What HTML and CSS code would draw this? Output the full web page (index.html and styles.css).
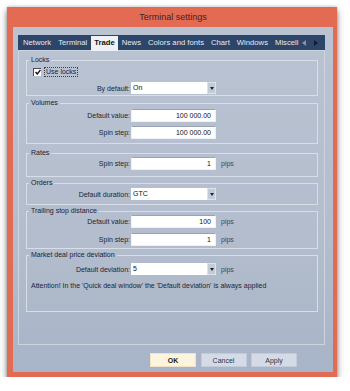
FILE: index.html
```html
<!DOCTYPE html>
<html>
<head>
<meta charset="utf-8">
<link rel="stylesheet" href="styles.css">
</head>
<body>
<div class="window">
  <div class="titlebar">Terminal settings</div>
  <div class="client">
    <div class="tabs">
      <div class="tablist">
        <div class="tab">Network</div>
        <div class="tab">Terminal</div>
        <div class="tab active">Trade</div>
        <div class="tab">News</div>
        <div class="tab">Colors and fonts</div>
        <div class="tab">Chart</div>
        <div class="tab">Windows</div>
        <div class="tab last">Miscell</div>
      </div>
      <div class="arrows">
        <svg width="4" height="6" viewBox="0 0 4 6"><path d="M4 0 L0 3 L4 6 Z" fill="#8592a8"/></svg>
        <svg width="4" height="6" viewBox="0 0 4 6"><path d="M0 0 L4 3 L0 6 Z" fill="#121c2c"/></svg>
      </div>
    </div>
    <div class="panel">
      <fieldset class="grp g-locks">
        <legend>Locks</legend>
        <div class="check-row">
          <span class="cb"><svg width="6" height="6" viewBox="0 0 6 6"><path d="M0.5 3 L2.3 5 L5.5 0.8" fill="none" stroke="#111" stroke-width="1.4"/></svg></span>
          <span class="cb-label">Use locks</span>
        </div>
        <div class="row r-combo1">
          <span class="lbl">By default:</span>
          <div class="combo"><span class="cval">On</span><span class="drop"><svg width="4" height="3" viewBox="0 0 4 3"><path d="M0 0 H4 L2 3 Z" fill="#222"/></svg></span></div>
        </div>
      </fieldset>

      <fieldset class="grp g-volumes">
        <legend>Volumes</legend>
        <div class="row">
          <span class="lbl">Default value:</span>
          <div class="input">100 000.00</div>
        </div>
        <div class="row r-gap4">
          <span class="lbl">Spin step:</span>
          <div class="input">100 000.00</div>
        </div>
      </fieldset>

      <fieldset class="grp g-rates">
        <legend>Rates</legend>
        <div class="row">
          <span class="lbl">Spin step:</span>
          <div class="input">1</div>
          <span class="unit">pips</span>
        </div>
      </fieldset>

      <fieldset class="grp g-orders">
        <legend>Orders</legend>
        <div class="row r-orders">
          <span class="lbl">Default duration:</span>
          <div class="combo"><span class="cval">GTC</span><span class="drop"><svg width="4" height="3" viewBox="0 0 4 3"><path d="M0 0 H4 L2 3 Z" fill="#222"/></svg></span></div>
        </div>
      </fieldset>

      <fieldset class="grp g-trailing">
        <legend>Trailing stop distance</legend>
        <div class="row">
          <span class="lbl">Default value:</span>
          <div class="input">100</div>
          <span class="unit">pips</span>
        </div>
        <div class="row r-gap5">
          <span class="lbl">Spin step:</span>
          <div class="input">1</div>
          <span class="unit">pips</span>
        </div>
      </fieldset>

      <fieldset class="grp g-market">
        <legend>Market deal price deviation</legend>
        <div class="row r-market">
          <span class="lbl">Default deviation:</span>
          <div class="combo"><span class="cval">5</span><span class="drop"><svg width="4" height="3" viewBox="0 0 4 3"><path d="M0 0 H4 L2 3 Z" fill="#222"/></svg></span></div>
          <span class="unit">pips</span>
        </div>
        <p class="note">Attention! In the 'Quick deal window' the 'Default deviation' is always applied</p>
      </fieldset>
    </div>
    <div class="buttons">
      <button class="btn ok">OK</button>
      <button class="btn">Cancel</button>
      <button class="btn">Apply</button>
    </div>
  </div>
</div>
</body>
</html>
```

FILE: styles.css
```css
html, body {
  margin: 0;
  padding: 0;
  background: #ffffff;
}
body {
  font-family: "Liberation Sans", Arial, sans-serif;
  font-size: 7px;
  color: #1c2534;
}
.window {
  margin: 7px 0 0 7px;
  width: 330px;
  box-sizing: border-box;
  padding: 0 4px 5px 6px;
  background: #e36a53;
  box-shadow: 0 4px 7px rgba(0, 0, 0, 0.45), 0 0 3px rgba(0, 0, 0, 0.25);
}
.titlebar {
  height: 20px;
  line-height: 20px;
  text-align: center;
  font-size: 9px;
  color: #3e2420;
}
.client {
  height: 345px;
  box-sizing: border-box;
  padding: 8px 8px 5px 5px;
  background: linear-gradient(#b9c3d2, #b3bdcd 60%, #a8b4c7);
  display: flex;
  flex-direction: column;
}
.tabs {
  height: 15px;
  background: #2c4569;
  display: flex;
  align-items: flex-start;
  padding-left: 1.5px;
}
.tablist {
  width: 280px;
  display: flex;
  white-space: nowrap;
  height: 16px;
}
.tab {
  flex: none;
  font-size: 7.7px;
  line-height: 15px;
  height: 15px;
  padding: 0 3.5px;
  color: #e6ebf2;
}
.tab.last {
  padding-right: 0;
}
.tab.active {
  margin-top: 1px;
  height: 15px;
  line-height: 14px;
  background: #eef1f6;
  color: #0e1420;
  font-weight: bold;
  position: relative;
  z-index: 1;
}
.arrows {
  flex: 1;
  display: flex;
  align-items: center;
  height: 15px;
  gap: 8px;
  padding-left: 2px;
}
.panel {
  height: 295px;
  box-sizing: border-box;
  border: 1px solid #ccd4df;
  padding: 5px 6px 0 7px;
}
.grp {
  margin: 0;
  padding: 0;
  border: 1px solid #d8dee7;
  min-width: 0;
}
.grp legend {
  margin-left: 2px;
  padding: 0 2px;
  font-size: 7px;
  line-height: 8px;
  color: #1a2233;
}
.row {
  display: flex;
  align-items: center;
}
.lbl {
  width: 104px;
  box-sizing: border-box;
  padding-right: 1px;
  text-align: right;
  flex: none;
}
.input {
  width: 85px;
  height: 13px;
  box-sizing: border-box;
  background: #ffffff;
  border: 1px solid #eef1f5;
  border-top-color: #98a2b1;
  text-align: right;
  padding-right: 4px;
  line-height: 11px;
  color: #111;
}
.combo {
  width: 85px;
  height: 12px;
  box-sizing: border-box;
  background: #ffffff;
  display: flex;
  align-items: stretch;
}
.cval {
  flex: 1;
  padding-left: 2px;
  line-height: 12px;
  color: #111;
}
.drop {
  width: 9px;
  background: #c2cbd8;
  border: 1px solid #dde3eb;
  box-sizing: border-box;
  display: flex;
  align-items: center;
  justify-content: center;
}
.unit {
  margin-left: 5px;
  color: #3a475c;
}

.check-row {
  display: flex;
  align-items: center;
  margin: 3px 0 0 6px;
  height: 9px;
}
.cb {
  width: 7px;
  height: 7px;
  background: #ffffff;
  border-left: 1px solid #4a5060;
  border-top: 1px solid #4a5060;
  display: flex;
  align-items: center;
  justify-content: center;
}
.cb-label {
  margin-left: 3px;
  padding: 0 1px;
  line-height: 8px;
  border: 1px dotted #3a4050;
}
.g-locks { padding-bottom: 1px; }
.r-combo1 { margin-top: 6px; }

.g-volumes { margin-top: 3px; padding-top: 2px; padding-bottom: 4px; }
.r-gap4 { margin-top: 4px; }

.g-rates { margin-top: 5px; padding-top: 0; padding-bottom: 6px; }

.g-orders { margin-top: 2px; padding-top: 1px; padding-bottom: 4px; }

.g-trailing { margin-top: 2px; padding-bottom: 2px; }
.r-gap5 { margin-top: 5px; }

.g-market { margin-top: 2px; padding-top: 4px; padding-bottom: 21px; }
.note {
  margin: 7px 0 0 4px;
  line-height: 8px;
  color: #1c2534;
}

.buttons {
  display: flex;
  justify-content: flex-end;
  gap: 4.5px;
  margin-top: 8px;
  padding-right: 28px;
}
.btn {
  width: 46px;
  height: 14px;
  box-sizing: border-box;
  padding: 0;
  margin: 0;
  font-family: "Liberation Sans", Arial, sans-serif;
  font-size: 7px;
  color: #2a3446;
  background: #d4dbe6;
  border: 1px solid #c3cbd8;
}
.btn.ok {
  background: #fdf4de;
  border-color: #eee3c8;
  font-weight: bold;
  color: #1a1a1a;
}
```
